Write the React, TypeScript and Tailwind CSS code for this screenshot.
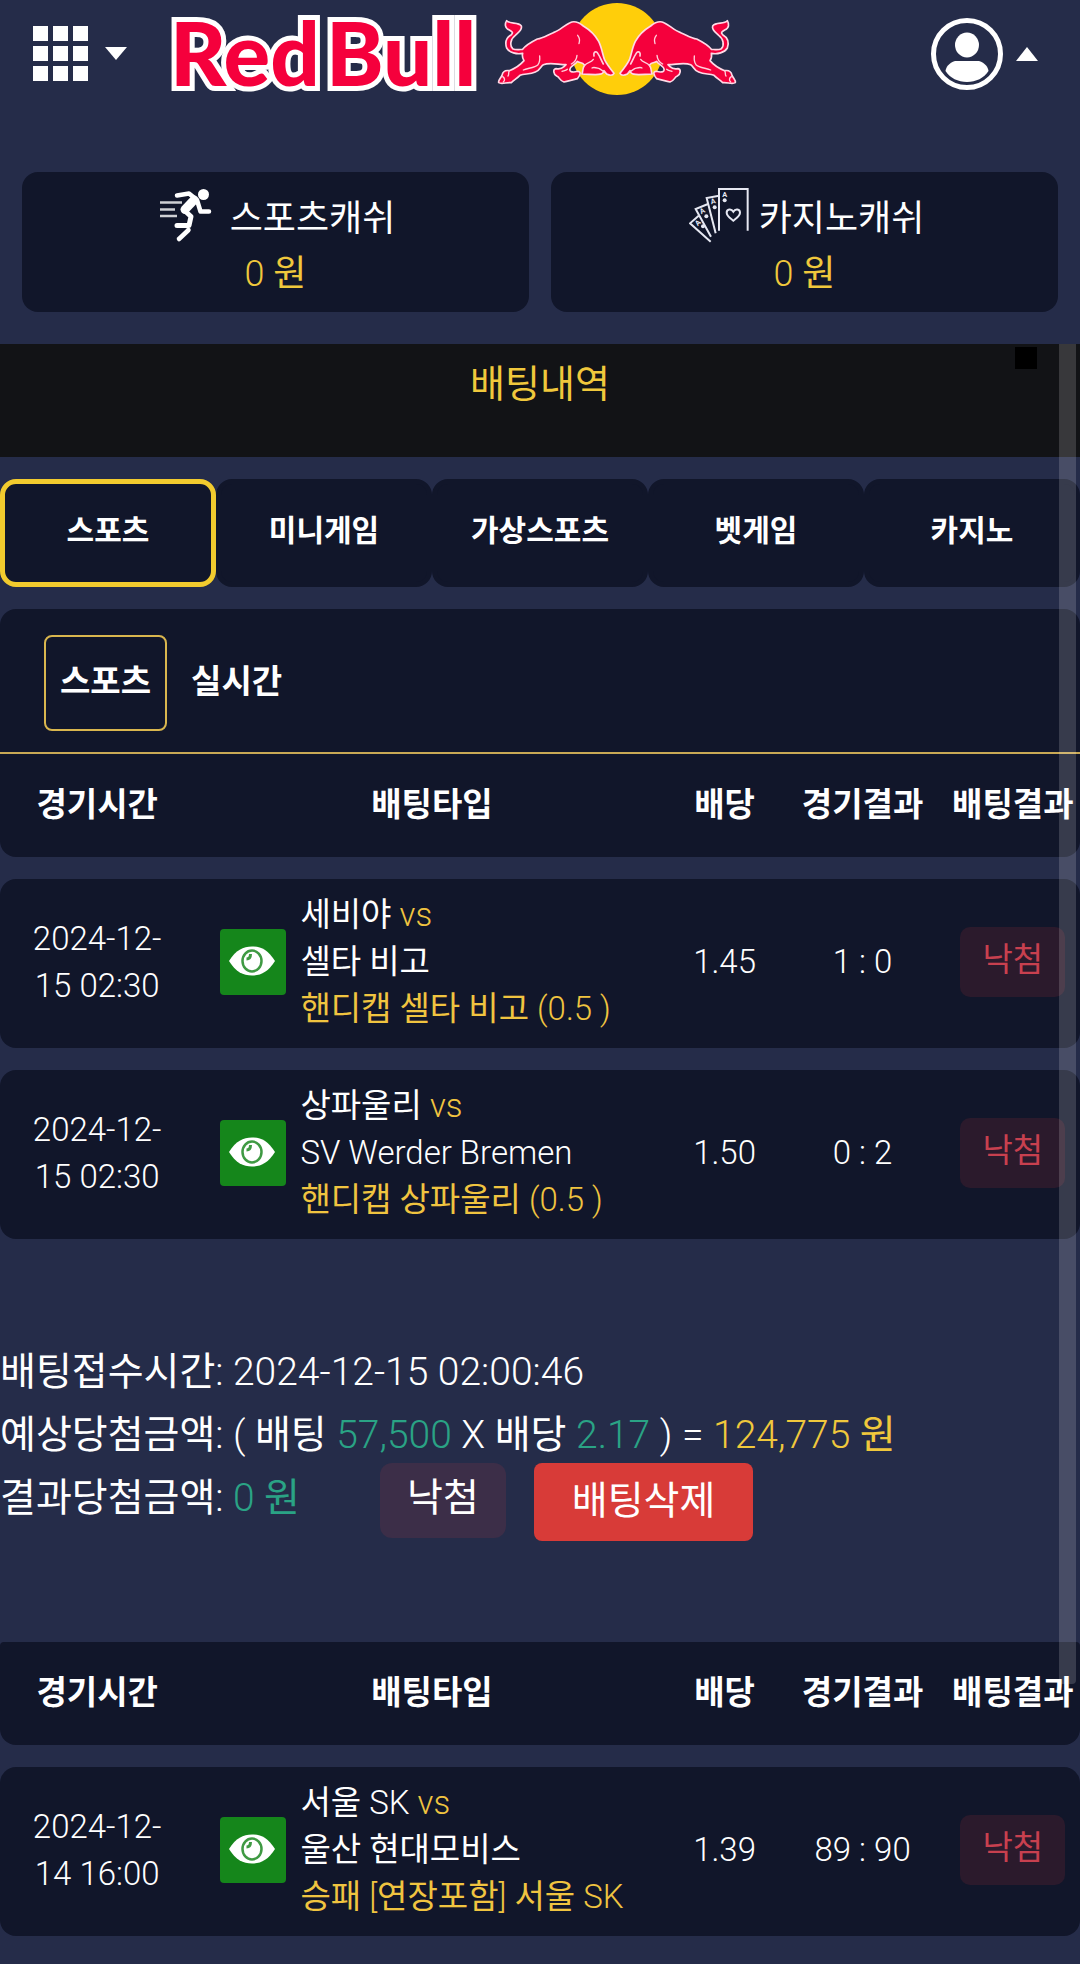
interface Pick {
  date: string;
  home: string;
  away: string;
  selection: string;
  odds: string;
  score: string;
  result: string;
}

const tabs = ["스포츠", "미니게임", "가상스포츠", "벳게임", "카지노"];

const columns = [
  { label: "경기시간", width: "w-[18%]" },
  { label: "배팅타입", width: "w-[44%]" },
  { label: "배당", width: "w-[110px]" },
  { label: "경기결과", width: "w-[166px]" },
  { label: "배팅결과", width: "w-auto" },
];

const firstSlip: Pick[] = [
  {
    date: "2024-12-15 02:30",
    home: "세비야",
    away: "셀타 비고",
    selection: "핸디캡 셀타 비고 (0.5 )",
    odds: "1.45",
    score: "1 : 0",
    result: "낙첨",
  },
  {
    date: "2024-12-15 02:30",
    home: "상파울리",
    away: "SV Werder Bremen",
    selection: "핸디캡 상파울리 (0.5 )",
    odds: "1.50",
    score: "0 : 2",
    result: "낙첨",
  },
];

const secondSlip: Pick[] = [
  {
    date: "2024-12-14 16:00",
    home: "서울 SK",
    away: "울산 현대모비스",
    selection: "승패 [연장포함] 서울 SK",
    odds: "1.39",
    score: "89 : 90",
    result: "낙첨",
  },
];

const GridIcon = () => (
  <svg className="w-[55px] h-[55px]" viewBox="0 0 55 55" fill="#fff" aria-hidden="true">
    {[0, 20, 40].map((y) => [0, 20, 40].map((x) => <rect key={`${x}-${y}`} x={x} y={y} width="15" height="15" />))}
  </svg>
);

const UserIcon = () => (
  <svg className="w-[74px] h-[74px]" viewBox="0 0 74 74" aria-hidden="true">
    <circle cx="37" cy="37" r="33.5" fill="none" stroke="#fff" strokeWidth="5" />
    <ellipse cx="37" cy="28" rx="12" ry="12.500" fill="#fff" />
    <path d="M25 44h24c6 2 9 6 9.500 10C54 61 46 65 37 65s-17-4-21.500-11C16 50 19 46 25 44z" fill="#fff" />
  </svg>
);

const Bull = () => (
  <g strokeLinejoin="round" strokeLinecap="round">
    <path
      d="M50 62C60 74 85 64 94 78C98 90 84 98 76 106C62 116 58 136 68 146C78 152 90 148 98 148C108 134 128 124 142 117C160 114 174 104 190 98C210 92 222 76 240 68C252 62 268 68 280 78C300 90 316 106 326 124C336 144 338 165 344 180C352 196 362 208 372 220C368 228 358 226 350 222L342 212C338 226 328 222 316 224C304 222 290 224 276 222C280 212 276 206 284 196C276 184 268 190 262 184C256 194 240 198 240 208C238 216 250 218 262 214C274 214 272 224 262 236C250 240 234 242 222 246C208 242 210 232 200 228C190 222 188 208 198 206C208 208 216 206 222 200L228 194C205 194 180 186 160 194C152 198 152 210 136 216C118 224 104 220 90 226C80 236 72 240 64 248C50 246 36 254 26 248C24 240 32 236 36 226C38 216 46 210 58 212C74 206 90 196 102 182C98 176 96 168 98 160C80 164 58 158 50 144C44 126 50 112 64 104C70 98 68 96 58 90C44 84 44 72 50 62Z"
      fill="#f5003c"
      stroke="#ffd9e6"
      strokeWidth="5"
    />
    <g fill="none" stroke="#ffd0dd" strokeWidth="4">
      <path d="M263 106C268 112 270 122 267 131" />
      <path d="M261 166C260 178 256 186 244 192" />
      <path d="M149 168C150 178 150 186 144 194C134 204 112 204 100 210" />
      <path d="M216 214C222 212 228 212 232 208" />
      <path d="M312 168C310 158 314 154 320 156C328 164 332 178 340 192" strokeWidth="5" />
      <path d="M284 196C294 186 304 188 310 178" />
      <path d="M306 204C312 200 320 204 328 206L346 218" />
      <path d="M58 212C54 218 58 224 54 228" />
      <path d="M38 230C44 234 46 240 40 246" />
    </g>
  </g>
);

const Logo = () => (
  <svg className="w-[580px] h-[106px]" viewBox="162 0 580 106" role="img" aria-label="Red Bull">
    <g
      className="font-[Lato,'Open_Sans',sans-serif] font-black text-[87px]"
      fill="#f5003c"
      stroke="#fff"
      strokeWidth="10"
      style={{ paintOrder: "stroke" }}
    >
      <text x="170" y="86">
        Red
      </text>
      <text x="326" y="86">
        Bull
      </text>
    </g>
    <circle cx="617" cy="49" r="46" fill="#ffce0a" />
    <g transform="translate(490 0) scale(0.3333)">
      <Bull />
    </g>
    <g transform="translate(744 0) scale(-0.3333 0.3333)">
      <Bull />
    </g>
  </svg>
);

const RunnerIcon = () => (
  <svg className="w-[60px] h-[55px]" viewBox="0 -1 60 55" fill="none" stroke="#fff" aria-hidden="true">
    <circle cx="43.500" cy="5.500" r="5.500" fill="#fff" stroke="none" />
    <path d="M17 6.500L29 4.500L37 11L40.500 22.500H49" strokeWidth="4.500" strokeLinecap="round" strokeLinejoin="round" />
    <path d="M34 11L25 20.500" strokeWidth="9" strokeLinecap="round" />
    <path d="M24 21L31 27.500L29 36.500H17" strokeWidth="5" strokeLinecap="round" strokeLinejoin="round" />
    <path d="M28.500 41L19 50" strokeWidth="4.500" strokeLinecap="round" />
    <path d="M0 13.500H22M0 20.500H15M0 27H17" strokeWidth="2.500" opacity="0.800" />
  </svg>
);

const CardsIcon = () => (
  <svg className="w-[60px] h-[55px]" viewBox="57 30 180 165" fill="none" stroke="#e6e8f2" strokeWidth="6" aria-hidden="true">
    <path d="M147 158V33H233V158" />
    <path d="M147 53L110 60L137 166" />
    <path d="M114 78L77 93L123 176" />
    <path d="M86 113L60 136L122 191" />
    <path d="M190 128C180 120 170 114 170 104C170 93 184 91 190 101C196 91 210 93 210 104C210 114 200 120 190 128Z" />
    <g fill="#e6e8f2" stroke="none" className="font-[Roboto,sans-serif] font-bold text-[22px]">
      <text x="157" y="56">A</text>
      <circle cx="164" cy="67" r="6" />
      <text x="124" y="79" transform="rotate(-14 124 79)">A</text>
      <circle cx="134" cy="88" r="6" />
      <text x="94" y="109" transform="rotate(-28 94 109)">A</text>
      <circle cx="109" cy="115" r="6" />
      <text x="83" y="145" transform="rotate(-44 83 145)">A</text>
      <circle cx="99" cy="145" r="6" />
    </g>
  </svg>
);

const EyeIcon = () => (
  <svg className="w-12 h-9" viewBox="0 0 48 36" aria-hidden="true">
    <path d="M0 17C7 6 14 2.500 23 2.500s16 3.500 23 14.500C39 28 32 31.500 23 31.500S7 28 0 17z" fill="#fff" />
    <ellipse cx="23" cy="17" rx="9.500" ry="10.500" fill="#fff" stroke="#3f9a43" strokeWidth="2.500" />
    <path d="M17.500 15c2.500 0 4-1.500 4-5" fill="none" stroke="#3f9a43" strokeWidth="3" />
  </svg>
);

const SlipHead = ({ rounded }: { rounded: boolean }) => (
  <thead>
    <tr>
      {columns.map((column) => (
        <th
          key={column.label}
          scope="col"
          className={`${column.width} h-[103px] bg-[#11162a] pb-[2px] text-[33px] leading-[48px] font-bold whitespace-nowrap first:rounded-bl-2xl last:rounded-br-2xl ${
            rounded ? "first:rounded-tl-sm last:rounded-tr-sm" : ""
          }`}
        >
          {column.label}
        </th>
      ))}
    </tr>
  </thead>
);

const SlipTable = ({ picks, rounded = false }: { picks: Pick[]; rounded?: boolean }) => (
  <table className="-mt-[22px] w-full table-fixed border-separate border-spacing-x-0 border-spacing-y-[22px] text-center text-[33px] leading-[47px]">
    <SlipHead rounded={rounded} />
    <tbody>
      {picks.map((pick) => (
        <tr key={pick.home} className="[&>td]:h-[169px] [&>td]:bg-[#11162a] [&>td]:pb-1">
          <td className="rounded-l-2xl px-6">{pick.date}</td>
          <td>
            <div className="flex items-center gap-[14px] pl-[26px] text-left whitespace-nowrap">
              <button
                type="button"
                aria-label="경기 보기"
                className="flex h-[66px] w-[66px] shrink-0 items-center justify-center rounded bg-[#15861b]"
              >
                <EyeIcon />
              </button>
              <div>
                <p>
                  {pick.home} <span className="text-[#f0c440]">vs</span>
                </p>
                <p>{pick.away}</p>
                <p className="text-[#f0c440]">{pick.selection}</p>
              </div>
            </div>
          </td>
          <td>{pick.odds}</td>
          <td>{pick.score}</td>
          <td className="rounded-r-2xl">
            <span className="inline-block rounded-[10px] bg-[#2b1a2c] px-[22px] pt-[9px] pb-[14px] text-[#c8404f]">
              {pick.result}
            </span>
          </td>
        </tr>
      ))}
    </tbody>
  </table>
);

const CashCard = ({ label, icon }: { label: string; icon: React.ReactNode }) => (
  <a href="#cash" className="flex-1 rounded-2xl bg-[#11162a] pt-4 pb-[10px] text-center text-[36px] leading-[55px]">
    <span className="flex items-start justify-center gap-[10px] pl-1">
      {icon}
      <span className="pt-1">{label}</span>
    </span>
    <span className="block text-[#f0c83c]">0 원</span>
  </a>
);

export default function App() {
  return (
    <div className="relative min-h-screen overflow-hidden bg-[#252c49] font-['Roboto_Light',Roboto,'Noto_Sans_CJK_KR',sans-serif] font-normal text-white">
      {/* Header */}
      <header className="flex h-[107px] items-center pr-[42px] pl-[33px]">
        <button type="button" aria-label="메뉴" className="flex items-center gap-[17px]">
          <GridIcon />
          <svg className="w-[22px] h-[13px]" viewBox="0 0 22 13" aria-hidden="true">
            <path d="M0 0h22L11 13z" fill="#fff" />
          </svg>
        </button>
        <a href="#home" className="ml-[35px] self-start">
          <Logo />
        </a>
        <button type="button" aria-label="내 정보" className="ml-auto flex items-center gap-3">
          <UserIcon />
          <svg className="w-[22px] h-[14px]" viewBox="0 0 22 14" aria-hidden="true">
            <path d="M11 0l11 14H0z" fill="#fff" />
          </svg>
        </button>
      </header>

      {/* Balances */}
      <section className="flex gap-[22px] px-[22px] pt-[65px] pb-8">
        <CashCard label="스포츠캐쉬" icon={<RunnerIcon />} />
        <CashCard label="카지노캐쉬" icon={<CardsIcon />} />
      </section>

      <main className="relative">
        <div className="relative h-[113px] bg-[#121316] pt-[10px] text-center">
          <h1 className="text-[38px] leading-[60px] text-[#f0c83c]">배팅내역</h1>
          <span className="absolute top-[3px] right-[43px] h-[22px] w-[22px] bg-black" />
        </div>

        <nav className="mt-[22px] flex">
          {tabs.map((tab, i) => (
            <button
              key={tab}
              type="button"
              className={`h-[108px] flex-1 rounded-2xl border-[5px] bg-[#11162a] pb-[6px] text-[30px] font-bold ${
                i === 0 ? "border-[#f2cb2e]" : "border-[#11162a]"
              }`}
            >
              {tab}
            </button>
          ))}
        </nav>

        <div className="mt-[22px] flex h-[145px] gap-[10px] rounded-t-2xl border-b-2 border-[#c9a955] bg-[#11162a] px-11 pt-[26px] text-[33px] font-bold">
          <button type="button" className="h-24 rounded-lg border-2 border-[#d9b64e] px-[14px] pb-[2px]">
            스포츠
          </button>
          <button type="button" className="h-24 rounded-lg px-[14px] pb-[2px]">
            실시간
          </button>
        </div>

        {/* table margin swallows the first row of spacing so the head joins the bar above */}
        <SlipTable picks={firstSlip} />

        <section className="pt-20 pb-[101px] text-[39px] leading-[63px] whitespace-nowrap">
          <p>배팅접수시간: 2024-12-15 02:00:46</p>
          <p>
            예상당첨금액: ( 배팅 <span className="text-[#2aa385]">57,500</span> X 배당{" "}
            <span className="text-[#2aa385]">2.17</span> ) = <span className="text-[#f0c83c]">124,775 원</span>
          </p>
          <div className="flex items-start">
            <p>
              결과당첨금액: <span className="text-[#2aa385]">0 원</span>
            </p>
            <span className="-mt-1 ml-20 rounded-xl bg-[#3c2e48] px-[27px] pt-1 pb-2">낙첨</span>
            <button type="button" className="-mt-1 ml-7 rounded-lg bg-[#d83b38] px-[38px] pt-[7px] pb-2">
              배팅삭제
            </button>
          </div>
        </section>

        <SlipTable picks={secondSlip} rounded />

        {/* Scroll thumb */}
        <span className="absolute top-0 right-1 h-[1340px] w-[17px] rounded-b bg-white/16" />
      </main>
    </div>
  );
}
